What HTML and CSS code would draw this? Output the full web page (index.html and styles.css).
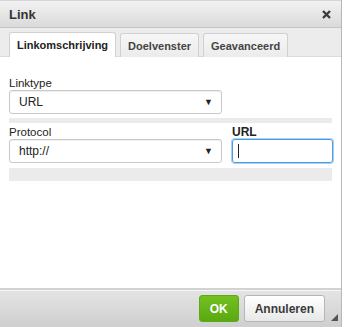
FILE: index.html
```html
<!DOCTYPE html>
<html lang="nl">
<head>
    <meta charset="UTF-8">
    <title>Link</title>
    <link rel="stylesheet" href="styles.css">
</head>
<body>
    <div class="dialog">
        <div class="dialog-title">
            <span>Link</span>
            <svg class="close" width="9" height="9" viewBox="0 0 9 9">
                <path d="M1 1 L8 8 M8 1 L1 8" stroke="#3c3c3c" stroke-width="2.4" stroke-linecap="butt"/>
            </svg>
        </div>

        <div class="tabs">
            <div class="tab active">Linkomschrijving</div>
            <div class="tab">Doelvenster</div>
            <div class="tab">Geavanceerd</div>
        </div>

        <div class="dialog-body">
            <div class="field">
                <label>Linktype</label>
                <div class="select wide">URL<span class="arrow">&#9660;</span></div>
            </div>
            <div class="divider"></div>

            <div class="row">
                <div class="field">
                    <label>Protocol</label>
                    <div class="select wide">http://<span class="arrow">&#9660;</span></div>
                </div>
                <div class="field url-field">
                    <label class="strong">URL</label>
                    <div class="input focused"><span class="caret"></span></div>
                </div>
            </div>
            <div class="divider thick"></div>
        </div>

        <div class="dialog-footer">
            <button class="btn btn-ok">OK</button>
            <button class="btn">Annuleren</button>
            <span class="grip"></span>
        </div>
    </div>
</body>
</html>
```
FILE: styles.css
```css
* {
    margin: 0;
    padding: 0;
    box-sizing: border-box;
    font-family: 'Liberation Sans', Arial, sans-serif;
}

body {
    background: #fff;
}

.dialog {
    width: 342px;
    height: 327px;
    border-right: 1px solid #b8b8b8;
    display: flex;
    flex-direction: column;
    background: #fff;
}

.dialog-title {
    height: 28px;
    display: flex;
    align-items: center;
    justify-content: space-between;
    padding: 0 10px 0 9px;
    background: linear-gradient(#f2f2f2, #dadada);
    border-top: 1px solid #d6d6d6;
    border-bottom: 1px solid #c4c4c4;
    font-size: 13px;
    font-weight: bold;
    color: #333;
}

.tabs {
    height: 29px;
    display: flex;
    align-items: flex-end;
    gap: 4px;
    padding-left: 9px;
    background: #ececec;
    border-bottom: 1px solid #dcdcdc;
}

.tab {
    height: 24px;
    padding: 0 7px;
    display: flex;
    align-items: center;
    font-size: 11px;
    font-weight: bold;
    color: #444;
    background: linear-gradient(#f7f7f7, #ebebeb);
    border: 1px solid #d0d0d0;
    border-bottom: none;
    border-radius: 3px 3px 0 0;
    margin-bottom: -1px;
}

.tab.active {
    background: #fff;
    color: #222;
    height: 25px;
}

.dialog-body {
    flex: 1;
    padding: 20px 9px 0 9px;
}

.field label {
    display: block;
    font-size: 11.5px;
    color: #222;
    margin-bottom: 1px;
    line-height: 12px;
}

.field label.strong {
    font-weight: bold;
    font-size: 12px;
}

.select {
    height: 24px;
    display: flex;
    align-items: center;
    justify-content: space-between;
    padding: 0 8px 0 9px;
    border: 1px solid #c9c9c9;
    border-radius: 3px;
    font-size: 12px;
    color: #222;
    background: #fff;
    box-shadow: inset 0 1px 1px #eee;
}

.select.wide {
    width: 213px;
}

.arrow {
    font-size: 9px;
    color: #222;
}

.divider {
    height: 5px;
    background: #ebebeb;
    margin: 4px 0 3px 0;
}

.divider.thick {
    height: 13px;
    margin-top: 5px;
}

.row {
    display: flex;
    gap: 10px;
}

.input {
    width: 101px;
    height: 24px;
    border: 1px solid #4b9be6;
    border-radius: 3px;
    display: flex;
    align-items: center;
    padding-left: 5px;
    box-shadow: 0 0 0 1px #a9cff3;
}

.caret {
    width: 1px;
    height: 14px;
    background: #222;
}

.dialog-footer {
    height: 39px;
    display: flex;
    align-items: center;
    justify-content: flex-end;
    gap: 5px;
    padding-right: 16px;
    position: relative;
    background: linear-gradient(#e4e4e4, #cfcfcf);
    border-top: 2px solid #d2d2d2;
    box-shadow: inset 0 1px 0 #f6f6f6;
}

.btn {
    height: 27px;
    padding: 0 10px;
    font-size: 12px;
    font-weight: bold;
    color: #3a3a3a;
    border: 1px solid #b6b6b6;
    border-radius: 3px;
    background: linear-gradient(#ffffff, #e8e8e8);
}

.btn-ok {
    width: 40px;
    padding: 0;
    color: #fff;
    border-color: #5fa817;
    background: linear-gradient(#72c021, #5aa912);
}

.grip {
    position: absolute;
    right: 3px;
    bottom: 6px;
    width: 0;
    height: 0;
    border-left: 7px solid transparent;
    border-bottom: 7px solid #555;
}
```
